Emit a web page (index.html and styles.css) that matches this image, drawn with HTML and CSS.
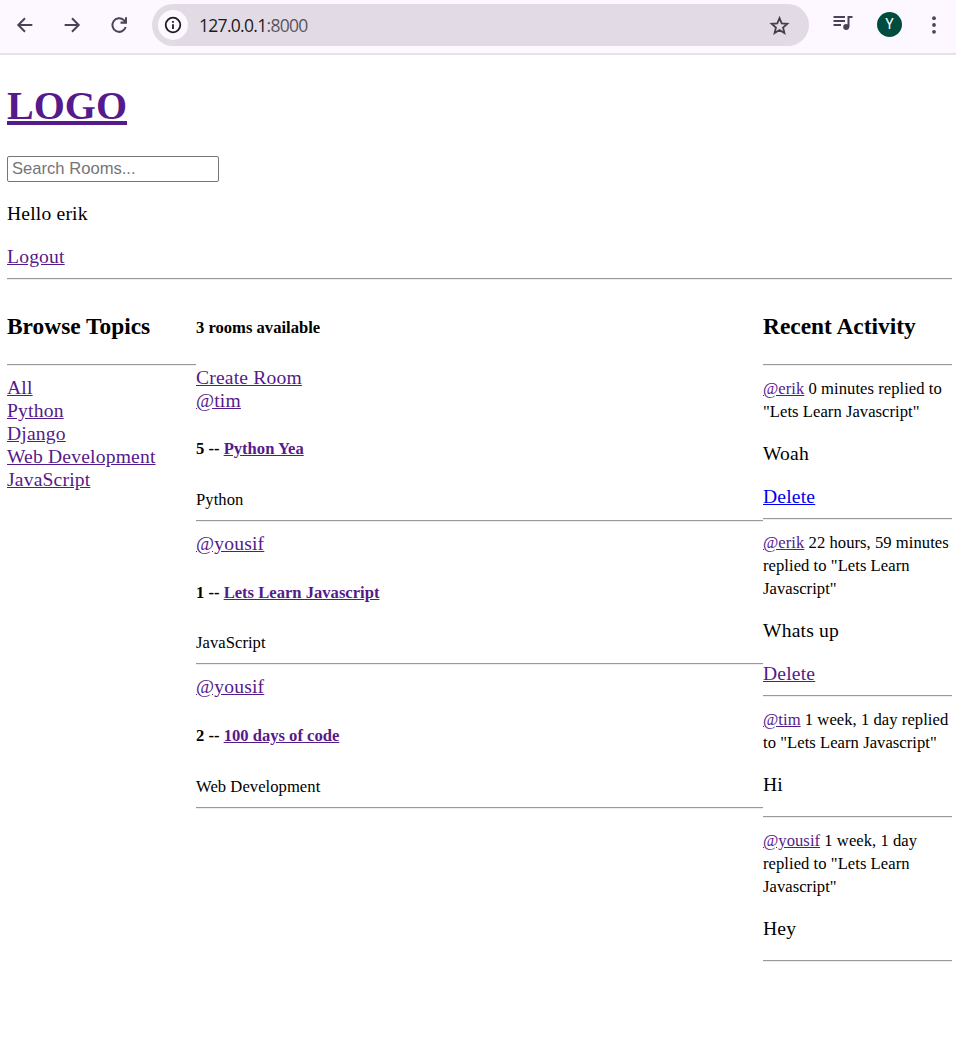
FILE: index.html
```html
<!DOCTYPE html>
<html lang="en">
<head>
<meta charset="utf-8">
<title>Rooms</title>
<link rel="stylesheet" href="styles.css">
</head>
<body>
<header class="toolbar">
  <svg class="nav-icon" viewBox="0 0 24 24"><path d="M20 12H5M12 4.7L4.7 12l7.3 7.3"/></svg>
  <svg class="nav-icon" viewBox="0 0 24 24"><path d="M4 12h15M12 4.7l7.3 7.3-7.3 7.3"/></svg>
  <svg class="nav-icon" viewBox="0 0 24 24"><path d="M19.300 14.2A7.4 7.4 0 1 1 17.3 6.700L19 8.500M19.600 3.500v5.900h-5.900"/></svg>
  <div class="address">
    <span class="info"><svg viewBox="0 0 18 18"><circle cx="9" cy="9" r="7.300"/><path d="M9 8.200v4.800M9 5v1.800"/></svg></span>
    <span class="url">127.0.0.1<span class="port">:8000</span></span>
    <svg class="star" viewBox="0 0 24 24"><path d="M12 4.300l2.300 5.400 5.900.5-4.500 3.900 1.400 5.700L12 16.700l-5.100 3.100 1.400-5.700-4.500-3.900 5.900-.5z"/></svg>
  </div>
  <svg class="queue" viewBox="0 0 20 16"><path d="M.5 2h11.500M.5 6h11.500M.5 10h7.500M15.500 12V2h4"/><circle cx="13.200" cy="12" r="3"/></svg>
  <span class="avatar">Y</span>
  <svg class="more" viewBox="0 0 6 18"><circle cx="3" cy="2.200" r="1.900"/><circle cx="3" cy="9" r="1.900"/><circle cx="3" cy="15.800" r="1.900"/></svg>
</header>
<main class="page">
  <h1 class="logo"><a href="#">LOGO</a></h1>
  <form class="search"><input class="search-input" type="text" placeholder="Search Rooms..."></form>
  <p class="greeting">Hello erik</p>
  <a class="logout" href="#">Logout</a>
  <hr class="rule">
  <div class="columns">
    <nav class="topics">
      <h3 class="heading">Browse Topics</h3>
      <hr class="rule">
      <div class="topic-list">
        <div><a href="#">All</a></div>
        <div><a href="#">Python</a></div>
        <div><a href="#">Django</a></div>
        <div><a href="#">Web Development</a></div>
        <div><a href="#">JavaScript</a></div>
      </div>
    </nav>
    <section class="rooms">
      <h5 class="count">3 rooms available</h5>
      <div><a class="create" href="#">Create Room</a></div>
      <article class="room">
        <a href="#">@tim</a>
        <h5 class="room-name">5 -- <a href="#">Python Yea</a></h5>
        <small class="room-topic">Python</small>
        <hr class="rule">
      </article>
      <article class="room">
        <a href="#">@yousif</a>
        <h5 class="room-name">1 -- <a href="#">Lets Learn Javascript</a></h5>
        <small class="room-topic">JavaScript</small>
        <hr class="rule">
      </article>
      <article class="room">
        <a href="#">@yousif</a>
        <h5 class="room-name">2 -- <a href="#">100 days of code</a></h5>
        <small class="room-topic">Web Development</small>
        <hr class="rule">
      </article>
    </section>
    <aside class="activity">
      <h3 class="heading">Recent Activity</h3>
      <hr class="rule">
      <div class="message">
        <small class="meta"><a href="#">@erik</a> 0 minutes replied to "Lets Learn Javascript"</small>
        <p class="body">Woah</p>
        <a class="delete unvisited" href="#">Delete</a>
      </div>
      <hr class="rule">
      <div class="message">
        <small class="meta"><a href="#">@erik</a> 22 hours, 59 minutes replied to "Lets Learn Javascript"</small>
        <p class="body">Whats up</p>
        <a class="delete" href="#">Delete</a>
      </div>
      <hr class="rule">
      <div class="message">
        <small class="meta"><a href="#">@tim</a> 1 week, 1 day replied to "Lets Learn Javascript"</small>
        <p class="body">Hi</p>
      </div>
      <hr class="rule">
      <div class="message">
        <small class="meta"><a href="#">@yousif</a> 1 week, 1 day replied to "Lets Learn Javascript"</small>
        <p class="body">Hey</p>
      </div>
      <hr class="rule">
    </aside>
  </div>
</main>
</body>
</html>
```
FILE: styles.css
```css
* { box-sizing: border-box; }
body { margin: 0; background: #fff; color: #000; font: 19.600px/23px "Liberation Serif", serif; letter-spacing: 0.18px; }
a { color: #551a8b; }
a.unvisited { color: #0000ee; }
p, h1, h3, h5 { margin: 0; }
h1, h3, h5 { letter-spacing: 0; }

.toolbar { display: flex; align-items: flex-start; height: 55px; background: #fdf7ff; border-bottom: 2px solid #e6e0e9; padding-left: 14px; }
.nav-icon { width: 22px; height: 22px; margin: 13.500px 25.500px 0 0; fill: none; stroke: #4a4458; stroke-width: 2.200; flex: none; }
.nav-icon + .nav-icon { margin-left: -0.5px; }
.address { display: flex; align-items: center; width: 657px; height: 42px; margin: 4px 0 0 -3.500px; padding: 0 18px 0 6px; border-radius: 21px; background: #e2dbe5; flex: none; }
.info { display: flex; align-items: center; justify-content: center; width: 30px; height: 30px; border-radius: 50%; background: #fdf7ff; }
.info svg { width: 18px; height: 18px; fill: none; stroke: #1d1b20; stroke-width: 1.800; }
.url { margin-left: 11px; font: 17.500px/24px "Open Sans", sans-serif; letter-spacing: -0.7px; color: #1d1b20; }
.port { color: #5b5561; }
.star { width: 23px; height: 23px; margin-left: auto; fill: none; stroke: #454148; stroke-width: 1.900; }
.queue { width: 20px; height: 16px; margin: 15px 0 0 24px; fill: none; stroke: #4a4458; stroke-width: 2; flex: none; }
.queue circle { fill: #4a4458; stroke: none; }
.avatar { width: 25px; height: 25px; margin: 12px 0 0 24px; border-radius: 50%; background: #004d40; color: #fff; font: 14px/25px Roboto, sans-serif; letter-spacing: 0; text-align: center; flex: none; }
.more { width: 6px; height: 18px; margin: 15.500px 0 0 29px; fill: #4a4458; flex: none; }

.page { padding: 28px 4px 0 7px; }
.logo { font-size: 40px; line-height: 46px; }
.search { display: flex; margin-top: 27px; }
.search-input { width: 212px; height: 26px; margin: 0; padding: 0 4px; border: 1px solid #767676; border-radius: 2px; font: 16.600px "Liberation Sans", sans-serif; }
.search-input::placeholder { color: #757575; }
.greeting { margin-top: 20px; }
.logout { display: block; width: fit-content; margin-top: 20px; }
.rule { height: 2px; margin: 0; border: 0; border-top: 1px solid #999; border-bottom: 1px solid #eee; }
.logout + .rule { margin-top: 10px; }

.columns { display: grid; grid-template-columns: 1fr 3fr 1fr; align-items: start; }
.heading { margin: 33px 0 24px; font-size: 23.400px; line-height: 27px; white-space: nowrap; }
.topic-list { padding-top: 10px; }
.count, .room-name { font-size: 16.600px; line-height: 19px; }
.count { margin: 38px 0 29px; }
.room { height: 131px; }
.room + .room { margin-top: 12px; }
.room:last-child { height: 132px; }
.room > a { vertical-align: top; }
.room-name { margin: 27px 0 30px; }
.room + .room .room-name { margin: 28px 0 29px; }
.room-topic { display: block; margin-bottom: 9px; font-size: 16.600px; letter-spacing: 0.05px; }
.room + .room:last-child .room-name { margin-bottom: 30px; }
.message { padding: 11px 0 10px; }
.meta { display: block; font-size: 16.600px; letter-spacing: 0.05px; }
.body { margin: 19px 0 20px; }
.body:last-child { margin-bottom: 10px; }
.delete { display: block; width: fit-content; }
```
